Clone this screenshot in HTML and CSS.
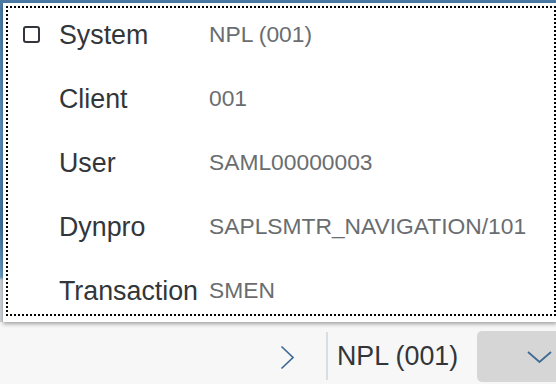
FILE: index.html
```html
<!DOCTYPE html>
<html>
<head>
<meta charset="utf-8">
<link rel="stylesheet" href="styles.css">
</head>
<body>
<div class="screen">
  <div class="stage">
    <div class="popover">
      <div class="focus">
        <div class="grid">
          <span class="check"></span>
          <span class="label">System</span>
          <span class="value">NPL (001)</span>

          <span></span>
          <span class="label">Client</span>
          <span class="value">001</span>

          <span></span>
          <span class="label">User</span>
          <span class="value">SAML00000003</span>

          <span></span>
          <span class="label">Dynpro</span>
          <span class="value">SAPLSMTR_NAVIGATION/101</span>

          <span></span>
          <span class="label">Transaction</span>
          <span class="value">SMEN</span>
        </div>
      </div>
    </div>
  </div>
  <div class="footer">
    <svg class="chev-right" width="15" height="25" viewBox="0 0 15 25"><path d="M1.5 1.5 L13 12.5 L1.5 23.5" fill="none" stroke="#3f6a94" stroke-width="1.7"/></svg>
    <span class="sep"></span>
    <span class="sys">NPL (001)</span>
    <div class="btn">
      <svg width="25" height="12" viewBox="0 0 25 12"><path d="M1 1 L12.5 11 L24 1" fill="none" stroke="#3f6a94" stroke-width="1.8"/></svg>
    </div>
  </div>
</div>
</body>
</html>
```

FILE: styles.css
```css
html, body {
  margin: 0;
  padding: 0;
}
body {
  width: 556px;
  height: 384px;
  overflow: hidden;
  font-family: "Liberation Sans", Arial, sans-serif;
  background: #f7f7f7;
}
.screen {
  display: flex;
  flex-direction: column;
  height: 384px;
  position: relative;
}
.stage {
  height: 322px;
  flex: none;
  background: linear-gradient(180deg, #4b7aa4 0%, #5b8fba 40%, #3f6f9b 70%, #6a9cc2 86%, #cfd5da 87%, #cfd5da 100%);
}
.popover {
  position: absolute;
  top: 3px;
  left: 3px;
  width: 554px;
  height: 319px;
  background: #fff;
  box-shadow: 0 2px 4px rgba(0, 0, 0, 0.35);
  box-sizing: border-box;
  padding: 3px 1px 6px 3px;
  z-index: 2;
}
.focus {
  height: 310px;
  box-sizing: border-box;
  padding: 5px 2px 2px 17px;
  background:
    repeating-linear-gradient(90deg, #000 0 2px, transparent 2px 4px) left top / 100% 2px no-repeat,
    repeating-linear-gradient(90deg, #000 0 2px, transparent 2px 4px) left bottom / 100% 2px no-repeat,
    repeating-linear-gradient(180deg, #000 0 2px, transparent 2px 4px) left top / 2px 100% no-repeat,
    repeating-linear-gradient(180deg, #000 0 2px, transparent 2px 4px) right top / 2px 100% no-repeat;
}
.grid {
  display: grid;
  grid-template-columns: 17px auto 1fr;
  grid-auto-rows: 48px;
  row-gap: 16px;
  align-items: center;
}
.check {
  width: 17px;
  height: 17px;
  box-sizing: border-box;
  border: 2px solid #32363a;
  border-radius: 3px;
  margin-top: -1px;
}
.label {
  margin-left: 19px;
  font-size: 26.8px;
  color: #32363a;
  line-height: 48px;
}
.value {
  margin-left: 11px;
  font-size: 22.8px;
  color: #6a6d70;
  line-height: 48px;
  margin-top: -2px;
}
.footer {
  flex: 1;
  display: flex;
  align-items: center;
  padding: 7px 0 1px 280px;
  overflow: hidden;
  background: #f7f7f7;
}
.chev-right {
  flex: none;
  margin-top: 2px;
}
.sep {
  flex: none;
  width: 2px;
  height: 48px;
  background: #d9dee2;
  margin-left: 31px;
}
.sys {
  margin-left: 9px;
  font-size: 26.8px;
  color: #32363a;
  white-space: nowrap;
}
.btn {
  flex: none;
  margin-left: 19px;
  width: 90px;
  height: 51px;
  border-radius: 5px;
  background: #d6d6d6;
  display: flex;
  align-items: center;
  padding-left: 50px;
  box-sizing: border-box;
}
.btn svg {
  margin-top: 2px;
}
```
